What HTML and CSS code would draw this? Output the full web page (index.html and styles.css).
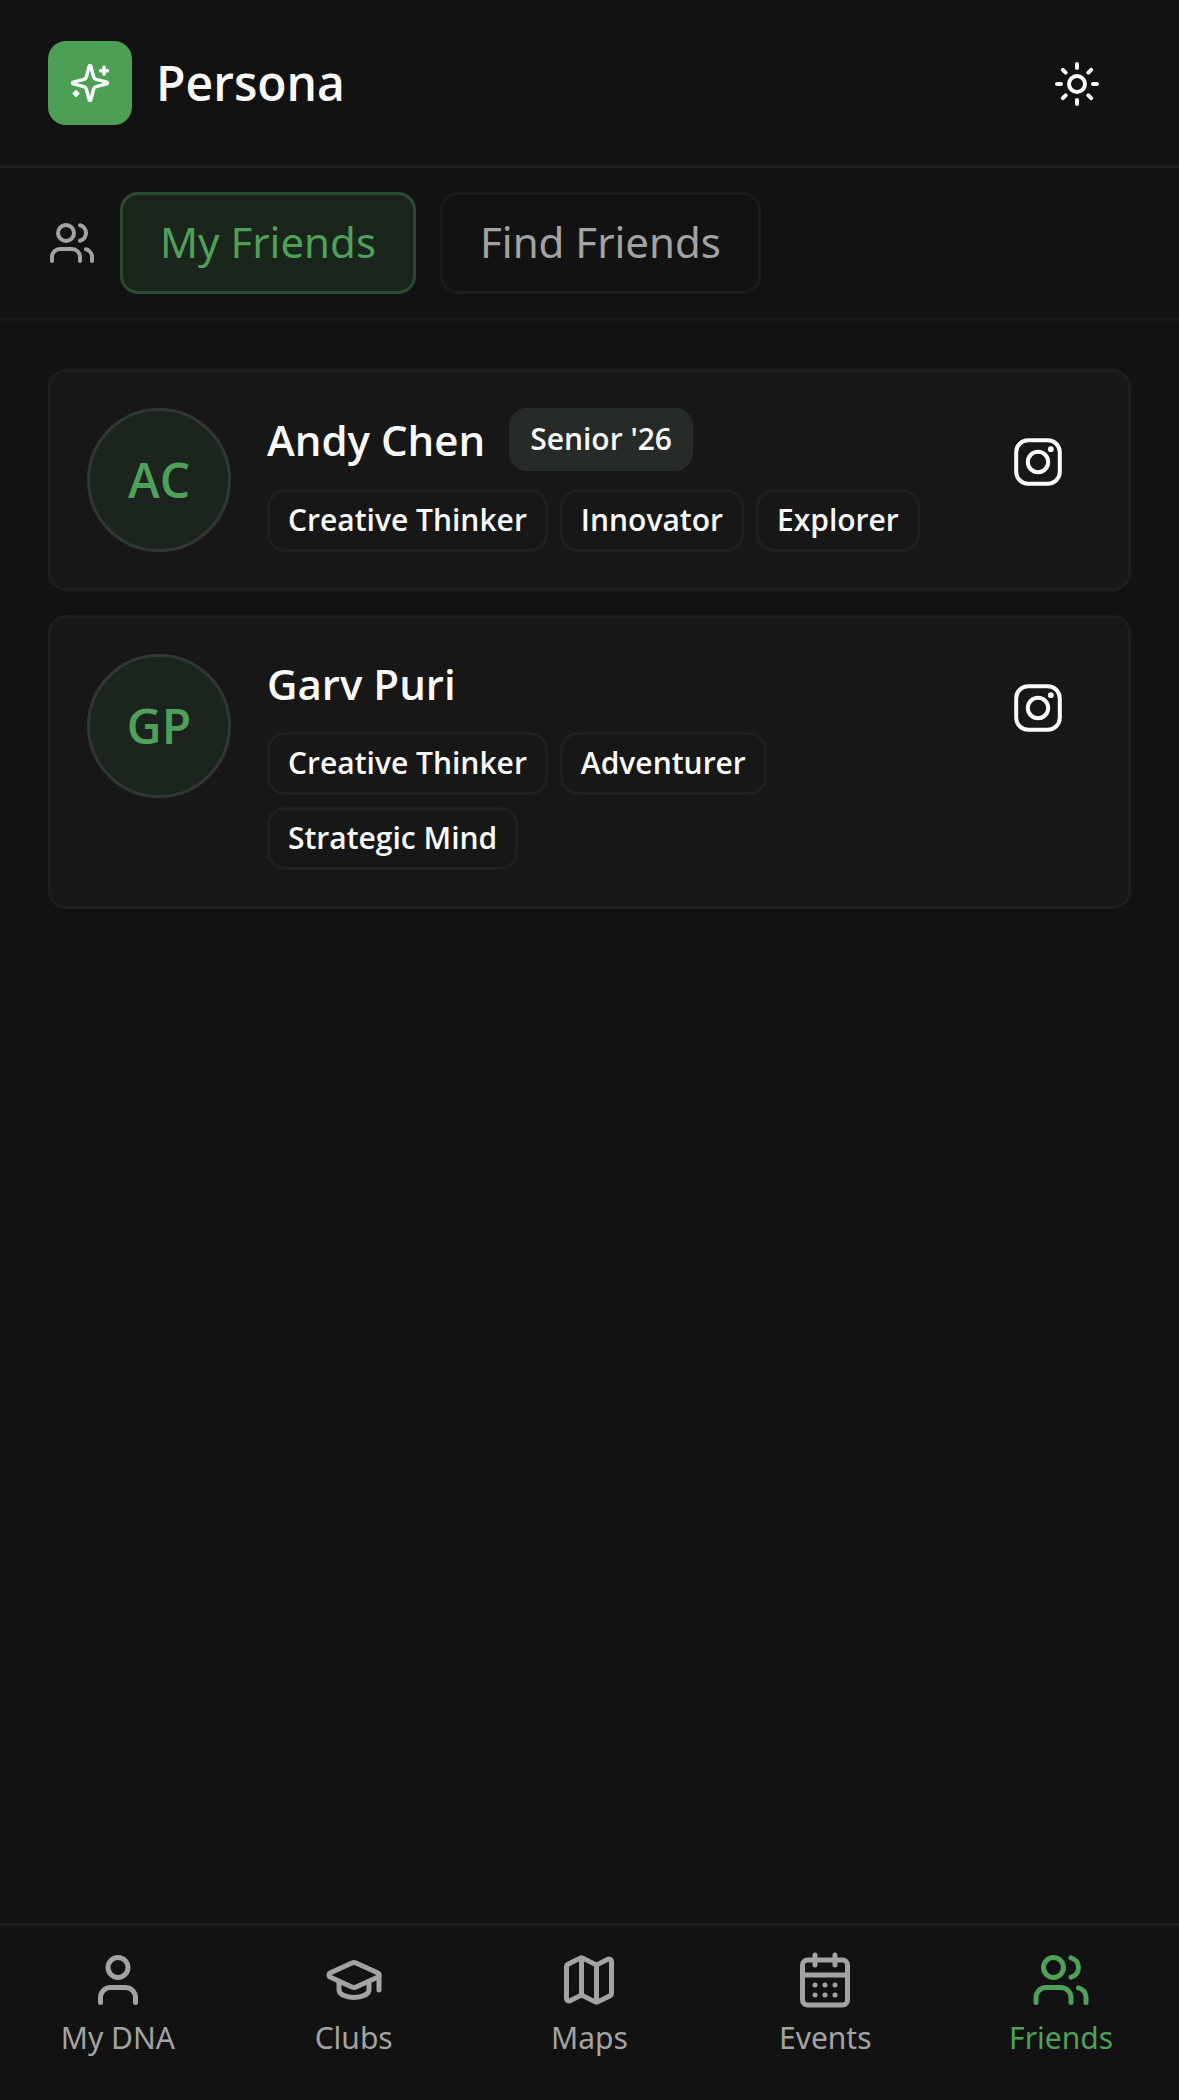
FILE: index.html
```html
<!DOCTYPE html>
<html lang="en">
<head>
<meta charset="utf-8">
<meta name="viewport" content="width=device-width, initial-scale=1">
<title>Persona</title>
<link rel="stylesheet" href="styles.css">
</head>
<body>
<div class="app">
  <header class="header">
    <div class="brand">
      <span class="logo">
        <svg class="icon icon-sm" viewBox="0 0 24 24" aria-hidden="true"><path d="M9.937 15.5A2 2 0 0 0 8.5 14.063l-6.135-1.582a.5.5 0 0 1 0-.962L8.5 9.936A2 2 0 0 0 9.937 8.5l1.582-6.135a.5.5 0 0 1 .963 0L14.063 8.5A2 2 0 0 0 15.5 9.937l6.135 1.581a.5.5 0 0 1 0 .964L15.5 14.063a2 2 0 0 0-1.437 1.437l-1.582 6.135a.5.5 0 0 1-.963 0z"/><path d="M20 3v4M22 5h-4M4 17v2M5 18H3"/></svg>
      </span>
      <h1 class="title">Persona</h1>
    </div>
    <button class="icon-button" type="button" aria-label="Toggle theme">
      <svg class="icon" viewBox="0 0 24 24" aria-hidden="true"><circle cx="12" cy="12" r="4"/><path d="M12 2v2M12 20v2M4.93 4.93l1.41 1.41M17.66 17.66l1.41 1.41M2 12h2M20 12h2M6.34 17.66l-1.41 1.41M19.07 4.93l-1.41 1.41"/></svg>
    </button>
  </header>

  <div class="tabs">
    <svg class="icon" viewBox="0 0 24 24" aria-hidden="true"><path d="M16 21v-2a4 4 0 0 0-4-4H6a4 4 0 0 0-4 4v2"/><circle cx="9" cy="7" r="4"/><path d="M22 21v-2a4 4 0 0 0-3-3.87M16 3.13a4 4 0 0 1 0 7.75"/></svg>
    <button class="tab tab-active" type="button">My Friends</button>
    <button class="tab" type="button">Find Friends</button>
  </div>

  <main class="list">
    <article class="card">
      <span class="avatar">AC</span>
      <div class="info">
        <div class="name-row">
          <h2 class="name">Andy Chen</h2>
          <span class="tag tag-filled">Senior '26</span>
        </div>
        <div class="tags">
          <span class="tag">Creative Thinker</span>
          <span class="tag">Innovator</span>
          <span class="tag">Explorer</span>
        </div>
      </div>
      <a class="icon-button" href="#" aria-label="Andy Chen on Instagram">
        <svg class="icon" viewBox="0 0 24 24" aria-hidden="true"><rect x="1.1" y="1.1" width="21.8" height="21.8" rx="6"/><circle cx="12" cy="12" r="5.1"/><circle class="dot" cx="18.4" cy="5.6" r="1.45"/></svg>
      </a>
    </article>

    <article class="card">
      <span class="avatar">GP</span>
      <div class="info">
        <div class="name-row">
          <h2 class="name">Garv Puri</h2>
        </div>
        <div class="tags">
          <span class="tag">Creative Thinker</span>
          <span class="tag">Adventurer</span>
          <span class="tag">Strategic Mind</span>
        </div>
      </div>
      <a class="icon-button" href="#" aria-label="Garv Puri on Instagram">
        <svg class="icon" viewBox="0 0 24 24" aria-hidden="true"><rect x="1.1" y="1.1" width="21.8" height="21.8" rx="6"/><circle cx="12" cy="12" r="5.1"/><circle class="dot" cx="18.4" cy="5.6" r="1.45"/></svg>
      </a>
    </article>
  </main>

  <nav class="nav">
    <a class="nav-item" href="#">
      <svg class="icon icon-lg" viewBox="0 0 24 24" aria-hidden="true"><path d="M19 21v-2a4 4 0 0 0-4-4H9a4 4 0 0 0-4 4v2"/><circle cx="12" cy="7" r="4"/></svg>
      <span>My DNA</span>
    </a>
    <a class="nav-item" href="#">
      <svg class="icon icon-lg" viewBox="0 0 24 24" aria-hidden="true"><path d="M21.42 10.922a1 1 0 0 0-.019-1.838L12.83 5.18a2 2 0 0 0-1.66 0L2.6 9.08a1 1 0 0 0 0 1.832l8.57 3.908a2 2 0 0 0 1.66 0z"/><path d="M22 10v6M6 12.5V16a6 3 0 0 0 12 0v-3.5"/></svg>
      <span>Clubs</span>
    </a>
    <a class="nav-item" href="#">
      <svg class="icon icon-lg" viewBox="0 0 24 24" aria-hidden="true"><path d="M14.106 5.553a2 2 0 0 0 1.788 0l3.659-1.83A1 1 0 0 1 21 4.619v12.764a1 1 0 0 1-.553.894l-4.553 2.277a2 2 0 0 1-1.788 0l-4.212-2.106a2 2 0 0 0-1.788 0l-3.659 1.83A1 1 0 0 1 3 19.381V6.618a1 1 0 0 1 .553-.894l4.553-2.277a2 2 0 0 1 1.788 0z"/><path d="M15 5.764v15M9 3.236v15"/></svg>
      <span>Maps</span>
    </a>
    <a class="nav-item" href="#">
      <svg class="icon icon-lg" viewBox="0 0 24 24" aria-hidden="true"><path d="M8 2v4M16 2v4"/><rect x="3" y="4" width="18" height="18" rx="2"/><path d="M3 10h18M8 14h.01M12 14h.01M16 14h.01M8 18h.01M12 18h.01M16 18h.01"/></svg>
      <span>Events</span>
    </a>
    <a class="nav-item nav-active" href="#" aria-current="page">
      <svg class="icon icon-lg" viewBox="0 0 24 24" aria-hidden="true"><path d="M16 21v-2a4 4 0 0 0-4-4H6a4 4 0 0 0-4 4v2"/><circle cx="9" cy="7" r="4"/><path d="M22 21v-2a4 4 0 0 0-3-3.87M16 3.13a4 4 0 0 1 0 7.75"/></svg>
      <span>Friends</span>
    </a>
  </nav>
</div>
</body>
</html>
```
FILE: styles.css
```css
:root {
  --bg: #121212;
  --card: #171717;
  --border: #1e1e1e;
  --text: #fafafa;
  --muted: #a3a3a3;
  --green: #4fa058;
}

* {
  box-sizing: border-box;
}

body {
  margin: 0;
  background: var(--bg);
  color: var(--text);
  font-family: "Open Sans", "Noto Sans", sans-serif;
  font-size: 42px;
  line-height: 60px;
}

h1,
h2 {
  margin: 0;
}

a {
  color: inherit;
  text-decoration: none;
}

.app {
  display: flex;
  flex-direction: column;
  min-height: 100vh;
}

.icon {
  display: block;
  flex: none;
  width: 48px;
  height: 48px;
  fill: none;
  stroke: currentColor;
  stroke-width: 2;
  stroke-linecap: round;
  stroke-linejoin: round;
}

.icon-sm {
  width: 42px;
  height: 42px;
}

.icon-lg {
  width: 60px;
  height: 60px;
}

.dot {
  fill: currentColor;
  stroke: none;
}

.icon-button {
  display: flex;
  flex: none;
  align-items: center;
  justify-content: center;
  width: 108px;
  height: 108px;
  padding: 0;
  border: 0;
  background: none;
  color: var(--text);
}

.header {
  display: flex;
  align-items: center;
  justify-content: space-between;
  padding: 30px 48px 27px;
  border-bottom: 3px solid var(--border);
}

.brand {
  display: flex;
  align-items: center;
  gap: 24px;
  padding-bottom: 2px;
}

.logo {
  display: flex;
  align-items: center;
  justify-content: center;
  width: 84px;
  height: 84px;
  border-radius: 18px;
  background: #4c9f54;
}

.title {
  font-size: 48px;
  font-weight: 600;
}

.tabs {
  display: flex;
  align-items: center;
  gap: 24px;
  padding: 24px 48px;
  border-bottom: 3px solid #191919;
  color: var(--muted);
}

.tab {
  padding: 17px 37px 19px;
  border: 3px solid #1c1c1c;
  border-radius: 18px;
  background: none;
  color: var(--muted);
  font: inherit;
  font-family: "Noto Sans", sans-serif;
}

.tab-active {
  border-color: #2a4c32;
  background: #1a251c;
  color: var(--green);
}

.list {
  display: flex;
  flex: 1;
  flex-direction: column;
  gap: 24px;
  padding: 48px;
}

.card {
  display: flex;
  align-items: flex-start;
  gap: 36px;
  padding: 36px;
  border: 3px solid var(--border);
  border-radius: 18px;
  background: var(--card);
}

.avatar {
  display: flex;
  flex: none;
  align-items: center;
  justify-content: center;
  width: 144px;
  height: 144px;
  border: 3px solid #313733;
  border-radius: 50%;
  background: #1b241d;
  color: var(--green);
  font-size: 48px;
  font-weight: 600;
}

.info {
  display: flex;
  flex: 1;
  flex-direction: column;
  gap: 18px;
  min-width: 0;
}

.name-row {
  display: flex;
  align-items: center;
  gap: 24px;
}

.name {
  font-size: 42px;
  font-weight: 600;
}

.tags {
  display: flex;
  flex-wrap: wrap;
  gap: 12px;
}

.tag {
  padding: 5px 18px 7px;
  border: 3px solid #202020;
  border-radius: 18px;
  font-size: 30px;
  font-weight: 600;
  line-height: 45px;
}

.tag-filled {
  border-color: #262b28;
  background: #262b28;
}

.nav {
  display: grid;
  grid-template-columns: repeat(5, 1fr);
  padding: 24px 0 40px;
  border-top: 3px solid var(--border);
  color: var(--muted);
  font-family: "Noto Sans", sans-serif;
  font-size: 30px;
  line-height: 45px;
}

.nav-item {
  display: flex;
  flex-direction: column;
  align-items: center;
  gap: 5px;
}

.nav-active {
  color: var(--green);
}
```
